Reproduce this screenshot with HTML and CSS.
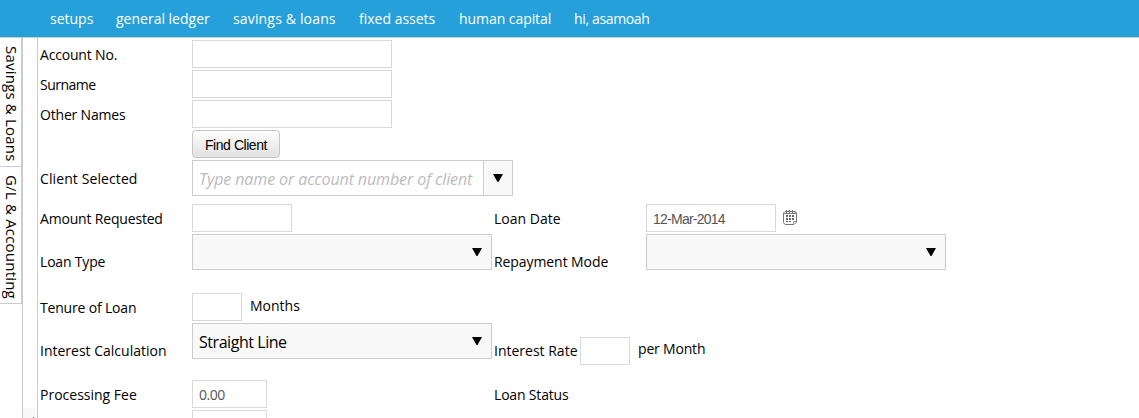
FILE: index.html
```html
<!DOCTYPE html>
<html lang="en">
<head>
<meta charset="utf-8">
<title>Loan Request</title>
<link rel="stylesheet" href="styles.css">
</head>
<body>
<nav class="menu">
<a class="m-setups">setups</a><a class="m-ledger">general ledger</a><a class="m-savings">savings &amp; loans</a><a class="m-assets">fixed assets</a><a class="m-human">human capital</a><a class="m-user">hi, asamoah</a>
</nav>
<div class="workspace">
<aside class="tabs"><div class="tab tab-savings"><span>Savings &amp; Loans</span></div><div class="tab tab-gl"><span>G/L &amp; Accounting</span></div></aside>
<div class="splitter"><div class="scroll-end"><i></i></div></div>
<main class="form">
<div class="row"><label class="tight">Account No.</label><div class="input long"></div></div>
<div class="row"><label class="tighter">Surname</label><div class="input long"></div></div>
<div class="row"><label class="tight">Other Names</label><div class="input long"></div></div>
<div class="row"><label></label><button class="find"><span>Find Client</span></button></div>
<div class="row row-client"><label class="loose">Client Selected</label><div class="combo client"><span class="hint">Type name or account number of client</span><div class="drop"><svg width="10" height="8"><path d="M0 0H10L5.5 8H4.5Z"/></svg></div></div></div>
<div class="row"><label class="tight">Amount Requested</label><div class="cell"><div class="input medium"></div></div><label>Loan Date</label><div class="input date"><span>12-Mar-2014</span></div>
<svg class="calendar" width="14" height="15" viewBox="0 0 14 15"><path d="M2 1.5L.5 3V12.5L2 14.5H11L13.5 12V3L12 1.5Z" fill="none" stroke="#777"/><path d="M1 3.5H13M3.5 0V3M6.5 0V3M9.5 0V3M12 1V3" stroke="#777" fill="none"/><path d="M3 5h2v2H3zM6 5h2v2H6zM9 5h2v2H9zM3 8h2v2H3zM6 8h2v2H6zM9 8h2v2H9zM3 11h2v1H3zM6 11h2v1H6z" fill="#666"/><path d="M10.5 14V11.5H13" fill="none" stroke="#999"/></svg></div>
<div class="row row-type"><label class="tight">Loan Type</label><div class="cell"><div class="combo wide"><svg width="10" height="8"><path d="M0 0H10L5.5 8H4.5Z"/></svg></div></div><label class="slightly-tight">Repayment Mode</label><div class="combo wide"><svg width="10" height="8"><path d="M0 0H10L5.5 8H4.5Z"/></svg></div></div>
<div class="row"><label class="tight">Tenure of Loan</label><div class="input short"></div><span class="unit">Months</span></div>
<div class="row row-calc"><label>Interest Calculation</label><div class="cell"><div class="combo wide"><span class="value">Straight Line</span><svg width="10" height="8"><path d="M0 0H10L5.5 8H4.5Z"/></svg></div></div><label class="rate">Interest Rate</label><div class="input short rate-input"></div><span class="unit rate-unit tight">per Month</span></div>
<div class="row"><label>Processing Fee</label><div class="cell"><div class="input fee"><span>0.00</span></div></div><label class="tight">Loan Status</label></div>
<div class="row last"><label></label><div class="input fee"></div></div>
</main>
</div>
</body>
</html>
```
FILE: styles.css
```css
* { box-sizing: border-box; }
body { margin: 0; height: 418px; overflow: hidden; background: #fff; color: #000; font: 14px/20px "Open Sans", "Noto Sans", sans-serif; }
.menu { height: 38px; background: #25a0da; border-bottom: 1px solid #ccc; padding: 9px 0 0 50px; display: flex; color: #fff; }
.menu a { white-space: nowrap; flex: none; }
.m-setups { width: 66px; }
.m-ledger { width: 117px; }
.m-savings { width: 126px; letter-spacing: .16px; }
.m-assets { width: 100px; }
.m-human { width: 115px; letter-spacing: -.06px; }
.m-user { letter-spacing: -.35px; }
.workspace { display: flex; height: 380px; overflow: hidden; }
.tabs { width: 22px; flex: none; }
.tab { width: 22px; border-right: 1px solid #ccc; border-bottom: 1px solid #ccc; writing-mode: vertical-rl; font-size: 15px; line-height: 19px; letter-spacing: .2px; padding-top: 8px; white-space: nowrap; }
.tab-savings { height: 129px; }
.tab-gl { height: 137px; }
.splitter { width: 16px; flex: none; border: solid #ccc; border-width: 0 1px; display: flex; align-items: flex-end; }
.scroll-end { height: 10px; width: 14px; background: #f9f9f9; display: flex; align-items: flex-end; padding-left: 10px; }
.scroll-end i { width: 1px; height: 1px; background: #555; }
.form { padding: 2px 0 0 2px; }
.row { display: flex; align-items: flex-start; height: 30px; }
.last { height: 8px; overflow: hidden; }
.row-client { height: 44px; }
.row-type { height: 59px; }
.row-calc { height: 57px; }
label { width: 152px; flex: none; padding-top: 5px; white-space: nowrap; }
.slightly-tight { letter-spacing: -.08px; }
.tight { letter-spacing: -.18px; }
.tighter { letter-spacing: -.5px; }
.loose { letter-spacing: .1px; }
.row-client label { padding-top: 9px; }
.row-type label, .row-calc label { padding-top: 18px; }
.cell { width: 302px; flex: none; }
.input { height: 28px; flex: none; border: 1px solid #d9d9d9; background: #fff; padding: 5px 6px 0; font: 14px/19px "Liberation Sans", Arial, sans-serif; color: #555; white-space: nowrap; }
.long { width: 200px; }
.medium { width: 100px; }
.date { width: 130px; letter-spacing: -.75px; }
.short { width: 50px; }
.fee { width: 75px; font: 14px/18px "Open Sans", sans-serif; letter-spacing: -.5px; }
.calendar { margin: 6px 0 0 7px; }
.find { width: 88px; height: 28px; padding: 1px 0 0; border: 1px solid #c5c5c5; border-radius: 4px; background: linear-gradient(#fdfdfd, #e2e2e2); color: #000; font: 14px/24px "Liberation Sans", Arial, sans-serif; letter-spacing: -.45px; white-space: nowrap; }
.combo { height: 36px; border: 1px solid #ccc; background: #f9f9f9; display: flex; font-size: 16px; line-height: 34px; white-space: nowrap; padding-left: 6px; }
.value { line-height: 36px; letter-spacing: -.45px; }
.wide { width: 300px; }
.wide svg { margin: 13px 9px 0 auto; }
.client { width: 321px; background: #fff; }
.hint { width: 284px; color: #bbb; font-style: italic; line-height: 36px; letter-spacing: -.1px; }
.drop { width: 29px; border-left: 1px solid #ccc; background: #f9f9f9; padding: 13px 0 0 9px; display: flex; align-items: flex-start; }
.unit { padding: 3px 0 0 8px; white-space: nowrap; }
.rate { width: 86px; }
.rate-input { margin-top: 14px; }
.rate-unit { padding-top: 16px; }
```
